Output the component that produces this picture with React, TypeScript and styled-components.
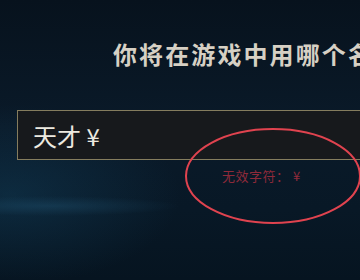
import React from 'react';
import styled, { createGlobalStyle } from 'styled-components';

const GlobalStyle = createGlobalStyle`
  html, body {
    margin: 0;
    padding: 0;
    background: #07131f;
  }
`;

const Screen = styled.div`
  position: relative;
  width: 360px;
  height: 280px;
  overflow: hidden;
  box-sizing: border-box;
  padding-top: 40px;
  font-family: "Noto Sans CJK SC", "Noto Sans", sans-serif;
  background:
    radial-gradient(ellipse 130px 10px at 50px 206px, rgba(50, 120, 160, 0.22), transparent),
    radial-gradient(ellipse 170px 90px at 10px 195px, rgba(20, 70, 100, 0.4), transparent),
    linear-gradient(180deg, #07121d 0%, #0a1a29 45%, #081826 75%, #061420 100%);
`;

const Title = styled.h1`
  margin: 0 0 0 113px;
  white-space: nowrap;
  font-size: 24px;
  line-height: 28px;
  font-weight: 700;
  letter-spacing: 2.1px;
  color: #d6d0c4;
`;

const NameField = styled.div`
  margin: 42px 0 0 17px;
  width: 360px;
  height: 50px;
  box-sizing: border-box;
  border: 1.5px solid #857d5e;
  border-right: none;
  background: #17191c;
  display: flex;
  align-items: center;
  padding-left: 15px;
  font-size: 24px;
  color: #ece9e0;
  white-space: nowrap;
`;

const ErrorText = styled.div`
  margin: 7px 0 0 222px;
  font-size: 13px;
  line-height: 17px;
  color: #8e2a3a;
  letter-spacing: 0.5px;
  white-space: pre;
`;

const Annotation = styled.svg`
  position: absolute;
  left: 184px;
  top: 127px;
  width: 178px;
  height: 98px;
  overflow: visible;
`;

export default function App() {
  return (
    <>
      <GlobalStyle />
      <Screen>
        <Title>你将在游戏中用哪个名字？</Title>
        <NameField>天才 ¥</NameField>
        <ErrorText>无效字符： ¥</ErrorText>
        <Annotation viewBox="0 0 178 98">
          <ellipse cx="89" cy="49" rx="87" ry="47" fill="none" stroke="#e0434f" strokeWidth="2" />
        </Annotation>
      </Screen>
    </>
  );
}
